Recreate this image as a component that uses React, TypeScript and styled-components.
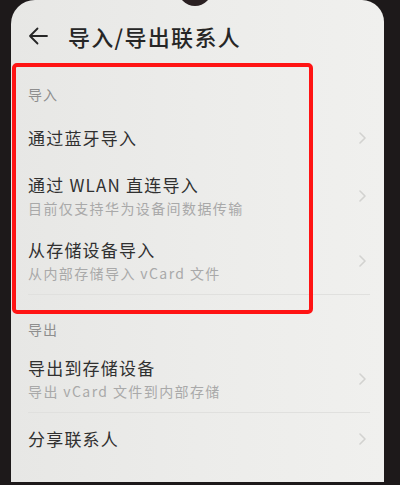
import React from "react";
import styled, { createGlobalStyle } from "styled-components";

const Global = createGlobalStyle`
  html, body { margin: 0; padding: 0; background: #1d191a; }
  body { width: 400px; height: 485px; overflow: hidden; }
  * { box-sizing: border-box; }
`;

const Phone = styled.div`
  width: 400px;
  height: 485px;
  background: #1d191a;
  display: flex;
  padding-left: 11px;
`;

const Screen = styled.div`
  position: relative;
  width: 373px;
  height: 482px;
  border-radius: 24px 22px 0 0;
  background: linear-gradient(90deg, #e7e7e5 0%, #ececea 50%, #f0f0ee 100%);
  font-family: "Noto Sans CJK SC", "Noto Sans", sans-serif;
  display: flex;
  flex-direction: column;
  overflow: hidden;
`;

const Notch = styled.div`
  position: absolute;
  left: 167px;
  top: -28px;
  width: 34px;
  height: 34px;
  border-radius: 50%;
  background: #2a2022;
`;

const Header = styled.div`
  display: flex;
  align-items: center;
  gap: 20px;
  height: 60px;
  padding: 22px 0 10px 17px;
`;

const Title = styled.div`
  font-size: 22px;
  line-height: 28px;
  letter-spacing: 1.3px;
  font-weight: 500;
  color: #262626;
`;

const SectionLabel = styled.div`
  padding: 24px 17px 8px;
  font-size: 14px;
  line-height: 20px;
  letter-spacing: 1px;
  color: #8e8e8e;
`;

const Row = styled.div<{ $two?: boolean }>`
  display: flex;
  align-items: center;
  justify-content: space-between;
  padding: ${(p) => (p.$two ? "9px 18px 11px 17px" : "0 18px 0 17px")};
  height: ${(p) => (p.$two ? "65px" : "52px")};
`;

const Texts = styled.div`
  display: flex;
  flex-direction: column;
  gap: 1px;
`;

const RowTitle = styled.div`
  font-size: 17px;
  line-height: 24px;
  letter-spacing: 1.2px;
  color: #303030;
`;

const RowSub = styled.div`
  font-size: 14px;
  line-height: 20px;
  letter-spacing: 1.4px;
  color: #a9a9a9;
`;

const Divider = styled.div`
  height: 1px;
  margin: 0 14px 0 17px;
  background: #e0e0de;
`;

const Highlight = styled.div`
  position: absolute;
  left: 1px;
  top: 63px;
  width: 301px;
  height: 251px;
  border: 4px solid #ff1414;
  border-radius: 5px;
  pointer-events: none;
`;

const Back = () => (
  <svg width="20" height="18" viewBox="0 0 20 18" fill="none">
    <path d="M19 9H2M9.5 1.5L2 9l7.5 7.5" stroke="#262626" strokeWidth="1.8" strokeLinecap="round" strokeLinejoin="round" />
  </svg>
);

const Chevron = () => (
  <svg width="7" height="12" viewBox="0 0 7 12" fill="none">
    <path d="M1 1l5 5-5 5" stroke="#d2d2d0" strokeWidth="1.6" strokeLinecap="round" strokeLinejoin="round" />
  </svg>
);

type Item = { title: string; sub?: string };

const Entry = ({ title, sub }: Item) => (
  <Row $two={!!sub}>
    <Texts>
      <RowTitle>{title}</RowTitle>
      {sub && <RowSub>{sub}</RowSub>}
    </Texts>
    <Chevron />
  </Row>
);

export default function App() {
  return (
    <>
      <Global />
      <Phone>
        <Screen>
          <Notch />
          <Header>
            <Back />
            <Title>导入/导出联系人</Title>
          </Header>
          <SectionLabel>导入</SectionLabel>
          <Entry title="通过蓝牙导入" />
          <Entry title="通过 WLAN 直连导入" sub="目前仅支持华为设备间数据传输" />
          <Entry title="从存储设备导入" sub="从内部存储导入 vCard 文件" />
          <Divider />
          <SectionLabel>导出</SectionLabel>
          <Entry title="导出到存储设备" sub="导出 vCard 文件到内部存储" />
          <Divider />
          <Entry title="分享联系人" />
          <Highlight />
        </Screen>
      </Phone>
    </>
  );
}
